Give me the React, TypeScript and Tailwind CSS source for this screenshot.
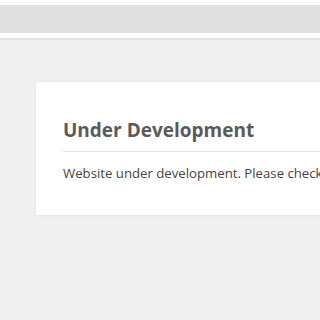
export default function App() {
  return (
    <div
      className="w-[320px] h-[320px] overflow-hidden bg-[#f0f0f0]"
      style={{ fontFamily: '"Open Sans", "Noto Sans", sans-serif' }}
    >
      <div className="bg-white pt-[5px] pb-[5px]">
        <div className="h-[28px] bg-[#e0e0e0]" />
      </div>
      <div className="h-[2px] bg-[#e2e2e2]" />
      <div className="pt-[42px] pl-[36px]">
        <div className="w-[400px] bg-white shadow-[0_0_3px_rgba(0,0,0,0.08)] pl-[27px] pt-[36px] pb-[32px]">
          <h1 className="text-[19px] leading-[24px] font-bold text-[#5a5a5a] pb-[9px] border-b border-[#e2e2e2]">
            Under Development
          </h1>
          <p className="mt-[11px] text-[13.2px] leading-[20px] text-[#444] whitespace-nowrap">
            Website under development. Please check back soon.
          </p>
        </div>
      </div>
    </div>
  );
}
